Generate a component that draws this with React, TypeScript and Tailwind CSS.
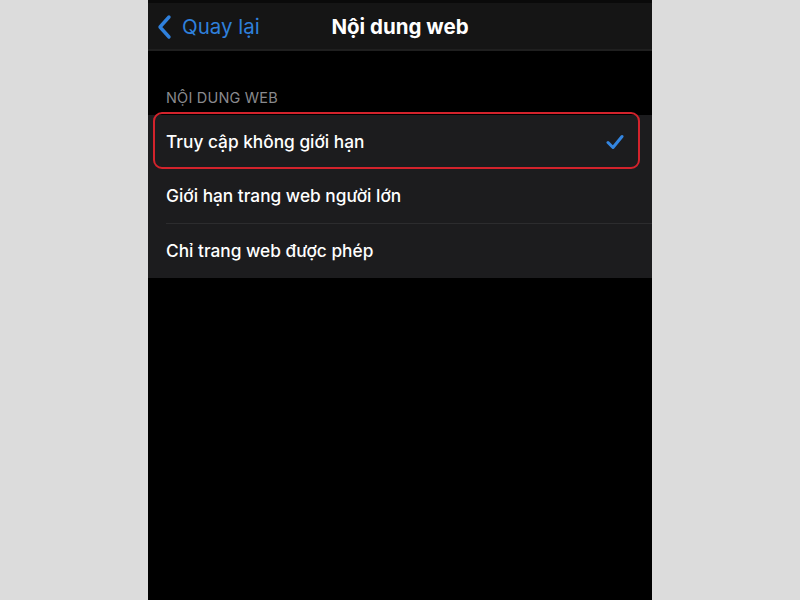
import React from "react";

export default function App() {
  const font = { fontFamily: 'Inter, "Noto Sans", "Liberation Sans", sans-serif' };
  return (
    <div className="w-[800px] h-[600px] bg-[#dcdcdc] flex justify-center" style={font}>
      <div className="w-[504px] h-full bg-black flex flex-col">
        <div className="h-[3px] bg-[#0a0a0a]" />
        <div className="h-[48px] bg-[#151515] border-b-2 border-[#1f1f1f] relative flex items-center">
          <div className="absolute left-[8px] top-[11px] flex items-center">
            <svg width="18" height="26" viewBox="0 0 18 26">
              <path d="M13 3 L4 13 L13 23" fill="none" stroke="#2f80dc" strokeWidth="3.4" strokeLinecap="round" strokeLinejoin="round" />
            </svg>
            <span className="ml-[8px] text-[20.5px] text-[#2f80dc] leading-none">Quay lại</span>
          </div>
          <div className="w-full text-center text-white text-[20.5px] font-bold leading-none pt-[2px]">Nội dung web</div>
        </div>
        <div className="h-[40px]" />
        <div className="pl-[18px] text-[14.5px] text-[#8a8a8e] uppercase leading-none tracking-[0.2px]">Nội dung web</div>
        <div className="h-[9px]" />
        <div className="bg-[#1c1c1e] flex flex-col">
          <div className="h-[54px] relative flex items-center pl-[18px] pr-[28px]">
            <span className="text-[17.3px] font-medium text-white flex-1">Truy cập không giới hạn</span>
            <svg width="18" height="16" viewBox="0 0 18 16">
              <path d="M2 8.5 L7 13.5 L16 2.5" fill="none" stroke="#3385e0" strokeWidth="3" strokeLinecap="round" strokeLinejoin="round" />
            </svg>
            <div className="absolute left-[5px] right-[12px] top-[-3px] bottom-[0px] border-2 border-[#d3232c] rounded-[9px]" />
          </div>
          <div className="h-[54px] flex items-center pl-[18px]">
            <span className="text-[17.3px] font-medium text-white">Giới hạn trang web người lớn</span>
          </div>
          <div className="ml-[18px] h-px bg-[#2c2c2e]" />
          <div className="h-[54px] flex items-center pl-[18px]">
            <span className="text-[17.3px] font-medium text-white">Chỉ trang web được phép</span>
          </div>
        </div>
      </div>
    </div>
  );
}
